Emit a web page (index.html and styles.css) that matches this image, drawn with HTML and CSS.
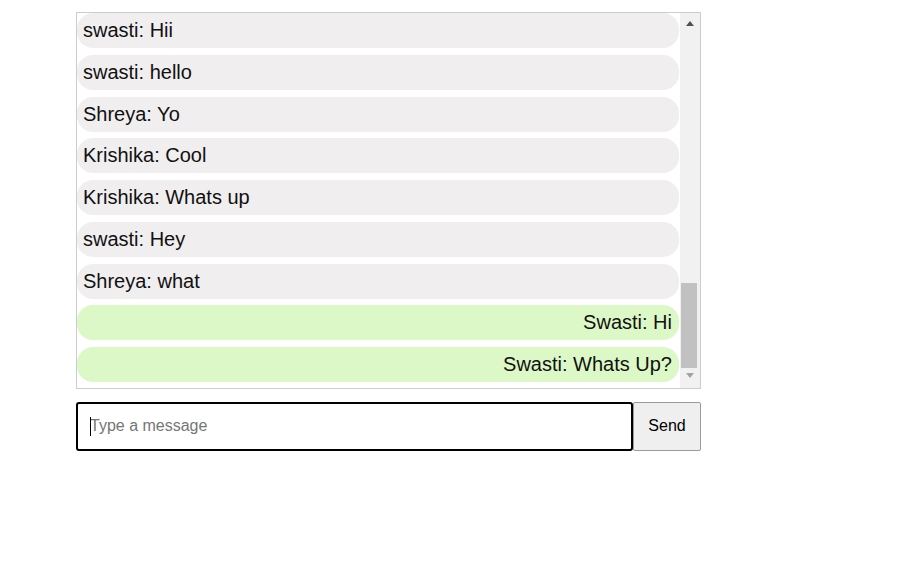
FILE: index.html
```html
<!DOCTYPE html>
<html>
<head>
<meta charset="utf-8">
<link rel="stylesheet" href="styles.css">
</head>
<body>
<div class="chat">
  <div class="box">
    <div class="messages">
      <div class="msg other">swasti: Hii</div>
      <div class="msg other">swasti: hello</div>
      <div class="msg other">Shreya: Yo</div>
      <div class="msg other">Krishika: Cool</div>
      <div class="msg other">Krishika: Whats up</div>
      <div class="msg other">swasti: Hey</div>
      <div class="msg other">Shreya: what</div>
      <div class="msg mine">Swasti: Hi</div>
      <div class="msg mine">Swasti: Whats Up?</div>
    </div>
    <div class="scrollbar">
      <div class="arrow up"></div>
      <div class="track"><div class="thumb"></div></div>
      <div class="arrow down"></div>
    </div>
  </div>
  <div class="composer">
    <div class="field">
      <input class="input" type="text" placeholder="Type a message">
      <span class="caret"></span>
    </div>
    <button class="send">Send</button>
  </div>
</div>
</body>
</html>
```

FILE: styles.css
```css
html, body {
  margin: 0;
  padding: 0;
  background: #fff;
}
body {
  font-family: "Liberation Sans", Arial, sans-serif;
}
.chat {
  width: 625px;
  padding: 12px 0 0 76px;
}
.box {
  display: flex;
  height: 375px;
  border: 1px solid #cccccc;
  overflow: hidden;
}
.messages {
  flex: 1;
  display: flex;
  flex-direction: column;
  gap: 6.75px;
  padding: 0 1px 6px 0;
}
.msg {
  height: 23px;
  padding: 6px 7px 6px 6px;
  font-size: 20px;
  line-height: 23px;
  color: #111;
  border-radius: 16px;
  white-space: nowrap;
}
.other {
  background: #f0eeef;
}
.mine {
  background: #dcf8c6;
  text-align: right;
}
.scrollbar {
  width: 20px;
  background: #f1f1f1;
  display: flex;
  flex-direction: column;
}
.arrow {
  height: 20px;
  box-sizing: border-box;
  display: flex;
  justify-content: center;
  padding-right: 1px;
}
.arrow.up {
  align-items: flex-start;
  padding-top: 8px;
}
.arrow.down {
  align-items: flex-start;
  padding-top: 5px;
}
.arrow.up::before {
  content: "";
  width: 0;
  height: 0;
  border-left: 4.5px solid transparent;
  border-right: 4.5px solid transparent;
  border-bottom: 5px solid #505050;
}
.arrow.down::before {
  content: "";
  width: 0;
  height: 0;
  border-left: 4.5px solid transparent;
  border-right: 4.5px solid transparent;
  border-top: 5px solid #a3a3a3;
}
.track {
  flex: 1;
  display: flex;
  flex-direction: column;
  justify-content: flex-end;
}
.thumb {
  height: 85px;
  width: 16px;
  margin-left: 1px;
  background: #c1c1c1;
}
.composer {
  display: flex;
  margin-top: 13px;
  height: 49px;
}
.field {
  position: relative;
  flex: 1;
  display: flex;
}
.input {
  flex: 1;
  margin: 0;
  box-sizing: border-box;
  height: 49px;
  border: 2px solid #000;
  border-radius: 3px;
  padding: 0 12px 2px 12px;
  font-family: "Liberation Sans", Arial, sans-serif;
  font-size: 16px;
  color: #111;
  outline: none;
  caret-color: transparent;
}
.input::placeholder {
  color: #757575;
}
.caret {
  position: absolute;
  left: 14px;
  top: 15px;
  width: 1px;
  height: 19px;
  background: #000;
}
.send {
  width: 68px;
  height: 49px;
  margin: 0;
  box-sizing: border-box;
  background: #efefef;
  border: 1px solid #9a9a9a;
  border-radius: 2px;
  font-family: "Liberation Sans", Arial, sans-serif;
  font-size: 16px;
  color: #000;
  padding: 0 0 2px 0;
}
```
